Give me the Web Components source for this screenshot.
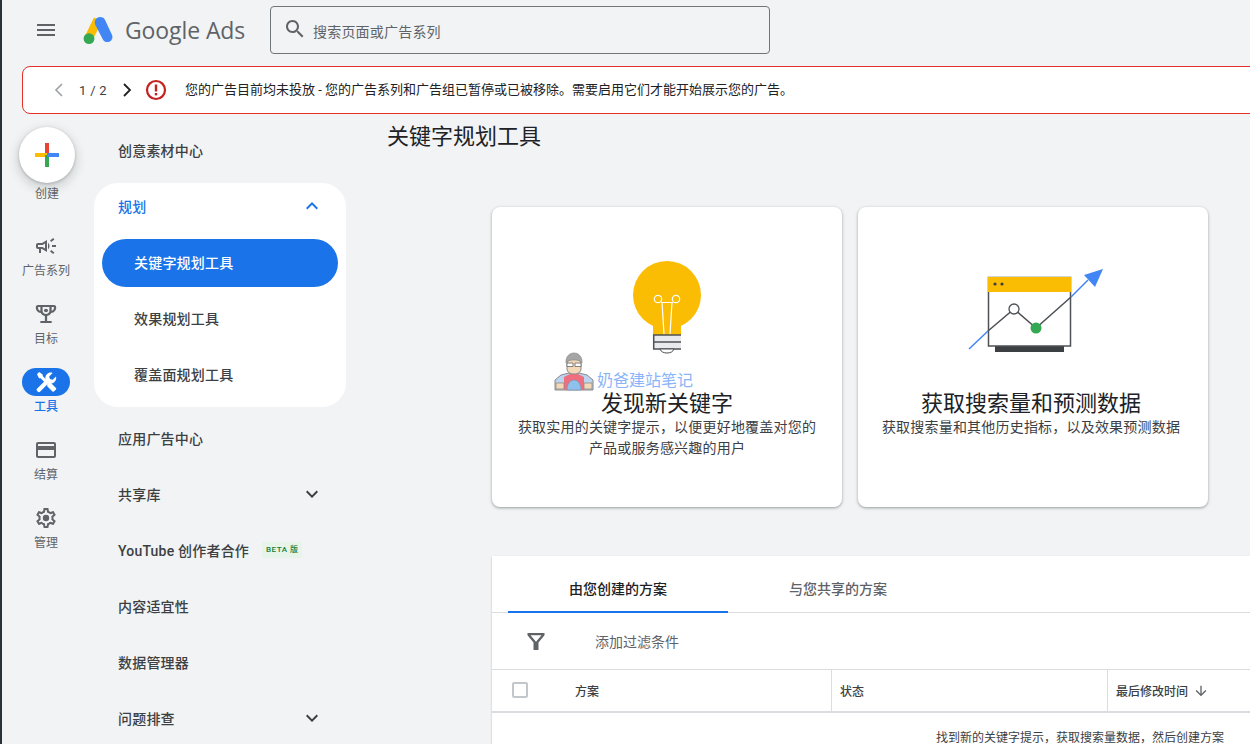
<!DOCTYPE html>
<html lang="zh">
<head>
<meta charset="utf-8">
<title>Google Ads</title>
<style>
  html, body { margin: 0; height: 744px; overflow: hidden; }
  body {
    background: #f1f3f4;
    border-left: 2px solid #2b3138;
    box-sizing: border-box;
    width: 1250px;
    color: #202124;
    font: 14px Roboto, "Noto Sans CJK SC", sans-serif;
    position: relative;
  }
  .workspace { display: flex; align-items: flex-start; }
  .group { display: flex; flex-direction: column; }
</style>
</head>
<body>
<template id="app-header-tpl">
  <style>
    :host { display: flex; align-items: center; height: 60px; padding-left: 32px; box-sizing: border-box; }
    svg.menu { width: 24px; height: 24px; fill: #5f6368; margin-right: 25px; }
    svg.logo { width: 32px; height: 30px; margin-right: 10px; }
    .word { font: 400 23px "Open Sans", Roboto, sans-serif; color: #5f6368; width: 145px; letter-spacing: -.1px; }
    .search { width: 500px; height: 48px; box-sizing: border-box; border: 1px solid #70757a; border-radius: 4px; display: flex; align-items: center; padding-left: 12px; gap: 6px; }
    .search svg { width: 24px; height: 24px; fill: #5f6368; margin-top: -2px; }
    .search span { color: #5f6368; font-size: 14px; letter-spacing: .2px; padding-top: 2px; }
  </style>
  <svg class="menu" viewBox="0 0 24 24"><path d="M3 18h18v-2H3v2zm0-5h18v-2H3v2zm0-7v2h18V6H3z"/></svg>
  <svg class="logo" viewBox="0 0 32 30">
    <path d="M11 2.5 2.2 20.5 9.5 25 19 6.5z" fill="#fbbc04"/>
    <path d="M19.8 2.6c-2.5-1.4-5.900-.7-7.300 1.900-1.400 2.500-.6 5 .8 7.300l6.600 12.600c1.400 2.600 4.400 3.400 6.900 2 2.500-1.400 3.400-4.500 2-7L22.200 5.200c-.6-1.100-1.400-2-2.400-2.600z" fill="#4285f4"/>
    <circle cx="6" cy="23.600" r="5.400" fill="#34a853"/>
  </svg>
  <span class="word">Google Ads</span>
  <div class="search">
    <svg viewBox="0 0 24 24"><path d="M15.500 14h-.79l-.28-.27C15.410 12.590 16 11.110 16 9.500 16 5.910 13.090 3 9.500 3S3 5.910 3 9.500 5.910 16 9.500 16c1.610 0 3.090-.59 4.230-1.570l.27.28v.79l5 4.990L20.490 19l-4.990-5zm-6 0C7.010 14 5 11.990 5 9.500S7.010 5 9.500 5 14 7.010 14 9.500 11.990 14 9.500 14z"/></svg>
    <span>搜索页面或广告系列</span>
  </div>
</template>

<template id="alert-banner-tpl">
  <style>
    :host { display: flex; align-items: center; height: 48px; box-sizing: border-box; margin: 6px 0 0 20px; width: 1240px; background: #fff; border: 1px solid #e5302a; border-radius: 8px; font-size: 13px; color: #202124; padding-left: 26px; }
    svg { flex: none; }
    .pager { color: #3c4043; font-size: 13px; width: 48px; text-align: center; letter-spacing: .3px; }
    .chev { width: 20px; height: 20px; }
    .err { width: 24px; height: 24px; margin: 0 17px 0 7px; }
    .msg { padding-bottom: 4px; }
  </style>
  <svg class="chev" viewBox="0 0 20 20" fill="none" stroke="#9aa0a6" stroke-width="1.600"><path d="M13 4 7 10l6 6"/></svg>
  <span class="pager">1 / 2</span>
  <svg class="chev" viewBox="0 0 20 20" fill="none" stroke="#202124" stroke-width="1.800"><path d="M7 4l6 6-6 6"/></svg>
  <svg class="err" viewBox="0 0 24 24"><circle cx="12" cy="12" r="9" fill="none" stroke="#c5221f" stroke-width="2.200"/><rect x="10.800" y="6.500" width="2.400" height="7" fill="#c5221f"/><rect x="10.800" y="15" width="2.400" height="2.400" fill="#c5221f"/></svg>
  <span class="msg"><slot></slot></span>
</template>

<template id="rail-item-tpl">
  <style>
    :host { display: flex; flex-direction: column; align-items: center; height: 48px; font-size: 12px; color: #5f6368; line-height: 16px; white-space: nowrap; }
    .pill { width: 48px; height: 28px; border-radius: 14px; display: flex; align-items: center; justify-content: center; margin-bottom: 3px; }
    ::slotted(svg) { width: 24px; height: 24px; fill: #5f6368; }
    :host([active]) .pill { background: #1a73e8; }
    :host([active]) ::slotted(svg) { fill: #fff; }
    :host([active]) { color: #1a73e8; font-weight: 500; }
  </style>
  <div class="pill"><slot name="icon"></slot></div>
  <span><slot></slot></span>
</template>

<template id="side-rail-tpl">
  <style>
    :host { display: flex; flex-direction: column; align-items: center; width: 88px; flex: none; padding-top: 13px; margin-right: 4px; box-sizing: border-box; font-size: 12px; color: #5f6368; }
    .fab { width: 56px; height: 56px; border-radius: 50%; background: #fff; box-shadow: 0 1px 3px rgba(60,64,67,.3), 0 4px 8px 3px rgba(60,64,67,.15); display: flex; align-items: center; justify-content: center; margin-left: 2px; }
    .fab svg { width: 24px; height: 24px; }
    .label { line-height: 16px; margin: 3px 0 30px 2px; }
    .items { display: flex; flex-direction: column; gap: 20px; }
  </style>
  <div class="fab">
    <svg viewBox="0 0 24 24">
      <rect x="10" y="0" width="4" height="12" fill="#ea4335"/>
      <rect x="0" y="10" width="12" height="4" fill="#fbbc04"/>
      <rect x="10" y="12" width="4" height="12" fill="#34a853"/>
      <rect x="12" y="10" width="12" height="4" fill="#4285f4"/>
    </svg>
  </div>
  <span class="label">创建</span>
  <div class="items"><slot></slot></div>
</template>

<template id="nav-item-tpl">
  <style>
    :host { display: flex; align-items: center; justify-content: space-between; height: 56px; padding: 0 22px 2px 24px; box-sizing: border-box; font-size: 14px; font-weight: 500; letter-spacing: .2px; color: #3c4043; white-space: nowrap; }
    .lead { display: flex; align-items: center; gap: 13px; }
    svg { width: 24px; height: 24px; fill: #3c4043; flex: none; display: none; }
    svg.show { display: block; }
    :host([sub]) { height: 48px; margin: 4px 8px; border-radius: 24px; padding: 0 32px 2px; }
    :host([selected]) { background: #1a73e8; color: #fff; }
    :host([head]) { height: 48px; margin-bottom: 4px; color: #1a73e8; }
    :host([head]) svg { fill: #1a73e8; }
    .beta { font-size: 8px; font-weight: 500; letter-spacing: .5px; color: #188038; background: #e6f4ea; padding: 3px 4px; border-radius: 2px; line-height: 10px; }
  </style>
  <div class="lead"><span><slot></slot></span><span class="beta" hidden><slot name="badge"></slot></span></div>
  <svg class="arrow" viewBox="0 0 24 24"><path d=""/></svg>
</template>

<template id="side-nav-tpl">
  <style>
    :host { display: block; width: 252px; flex: none; padding-top: 9px; box-sizing: border-box; }
    ::slotted(.group) { background: #fff; border-radius: 24px; margin: 4px 0; padding-bottom: 4px; }
  </style>
  <slot></slot>
</template>

<template id="tool-card-tpl">
  <style>
    :host { display: flex; flex-direction: column; align-items: center; width: 350px; height: 300px; box-sizing: border-box; background: #fff; border-radius: 8px; box-shadow: 0 1px 2px rgba(60,64,67,.3), 0 1px 3px 1px rgba(60,64,67,.15); text-align: center; }
    :host([nudge]) { padding-right: 4px; }
    .art { height: 183px; width: 100%; display: flex; justify-content: center; align-items: flex-end; }
    :host([nudge]) .art { margin-right: -4px; }
    h2 { margin: 0; font-size: 22px; font-weight: 400; line-height: 27px; color: #202124; }
    p { margin: 0; font-size: 14px; letter-spacing: .2px; line-height: 21px; color: #3c4043; width: 302px; }
  </style>
  <div class="art"><slot name="art"></slot></div>
  <h2><slot name="title"></slot></h2>
  <p><slot></slot></p>
</template>

<template id="plans-table-tpl">
  <style>
    :host { display: block; width: 758px; height: 188px; background: #fff; box-shadow: 0 1px 2px rgba(60,64,67,.3); font-size: 14px; color: #3c4043; overflow: hidden; }
    .tabs { display: flex; height: 57px; padding-left: 16px; border-bottom: 1px solid #dadce0; box-sizing: border-box; font-weight: 500; }
    .tab { width: 220px; display: flex; align-items: center; justify-content: center; color: #5f6368; box-sizing: border-box; padding-top: 8px; }
    .tab.on { color: #202124; border-bottom: 2px solid #1a73e8; margin-bottom: -1px; }
    .filter { display: flex; align-items: center; height: 57px; border-bottom: 1px solid #dadce0; box-sizing: border-box; padding-left: 32px; color: #5f6368; font-size: 14px; }
    .filter svg { width: 24px; height: 24px; fill: #5f6368; margin-right: 47px; }
    .head { display: grid; grid-template-columns: 340px 276px 1fr; height: 43px; box-sizing: border-box; border-bottom: 2px solid #dadce0; font-size: 12px; font-weight: 500; }
    .head div { display: flex; align-items: center; border-right: 1px solid #dadce0; padding-left: 8px; }
    .head div:first-child { padding-left: 20px; }
    .head div:last-child { border: 0; }
    .check { width: 12px; height: 12px; border: 2px solid #c4c7c9; border-radius: 2px; margin-right: 47px; margin-top: -2px; }
    .head svg { width: 16px; height: 16px; fill: #5f6368; margin-left: 5px; }
    .empty { text-align: right; padding: 18px 26px 0 0; font-size: 12px; color: #3c4043; line-height: 14px; }
  </style>
  <div class="tabs"><div class="tab on">由您创建的方案</div><div class="tab">与您共享的方案</div></div>
  <div class="filter">
    <svg viewBox="0 0 24 24"><path d="M3.500 4h17v2.200l-6 7.300V21h-5v-7.500l-6-7.300zm3 2.200 5.500 6.600 5.500-6.600z" fill-rule="evenodd"/></svg>
    添加过滤条件
  </div>
  <div class="head">
    <div><span class="check"></span>方案</div>
    <div>状态</div>
    <div>最后修改时间<svg viewBox="0 0 24 24"><path d="M20 12l-1.410-1.410L13 16.170V4h-2v12.170l-5.580-5.590L4 12l8 8 8-8z"/></svg></div>
  </div>
  <div class="empty">找到新的关键字提示，获取搜索量数据，然后创建方案</div>
</template>

<template id="water-mark-tpl">
  <style>
    :host { position: absolute; left: 551px; top: 351px; display: flex; align-items: flex-end; font-size: 16px; color: #8ab4f8; line-height: 22px; }
    svg { width: 42px; height: 41px; margin-right: 2px; }
  </style>
  <svg viewBox="0 0 42 41">
    <path d="M2 39V29l6-5 8-2h10l8 2 6 5v10z" fill="#bcd4ef" stroke="#8a8a8a" stroke-width="1"/>
    <path d="M11 39V26l6-3h8l6 3v13z" fill="#ef6f7f"/>
    <path d="M14 39c0-6 3-10 7-10s7 4 7 10z" fill="#8fc1ee" stroke="#7c93ad" stroke-width=".7"/>
    <rect x="3" y="32" width="8" height="6" fill="#f3d9b8" stroke="#8a8a8a" stroke-width=".8"/>
    <rect x="31" y="32" width="8" height="6" fill="#f3d9b8" stroke="#8a8a8a" stroke-width=".8"/>
    <path d="M14 13c0-4 3-6 7-6s7 2 7 6v5c0 3-3 5-7 5s-7-2-7-5z" fill="#f3d9b8" stroke="#8a8a8a"/>
    <path d="M13 12c-.5-7 4-10 8-10s8.500 3 8 10c-2-2-3-3-8-3s-6 1-8 3z" fill="#a5a5a5" stroke="#8a8a8a" stroke-width=".7"/>
    <path d="M14 12h6v3.500h-6zm8 0h6v3.500h-6z" fill="#fff" stroke="#666" stroke-width=".8"/>
  </svg>
  <span><slot></slot></span>
</template>

<template id="keyword-page-tpl">
  <style>
    :host { display: block; flex: 1; min-width: 0; }
    h1 { margin: 8px 0 0 41px; font-size: 22px; font-weight: 400; line-height: 30px; color: #202124; }
    .cards { display: flex; gap: 16px; margin: 55px 0 0 146px; }
    .table { margin: 49px 0 0 146px; }
  </style>
  <h1>关键字规划工具</h1>
  <div class="cards"><slot></slot></div>
  <div class="table"><slot name="table"></slot></div>
</template>

<app-header></app-header>
<alert-banner>您的广告目前均未投放 - 您的广告系列和广告组已暂停或已被移除。需要启用它们才能开始展示您的广告。</alert-banner>
<div class="workspace">
  <side-rail>
    <rail-item><svg slot="icon" viewBox="0 0 24 24"><path d="M18 11v2h4v-2h-4zm-2 6.610c.96.71 2.210 1.650 3.200 2.390.4-.53.8-1.070 1.200-1.600-.99-.74-2.240-1.680-3.200-2.400-.4.54-.8 1.080-1.200 1.610zM20.400 5.600c-.4-.53-.8-1.070-1.200-1.600-.99.74-2.240 1.680-3.200 2.400.4.53.8 1.070 1.200 1.600.96-.72 2.210-1.650 3.200-2.400zM4 9c-1.100 0-2 .9-2 2v2c0 1.100.9 2 2 2h1v4h2v-4h1l5 3V6L8 9H4zm5.030 1.710L11 9.530v4.940l-1.970-1.180-.48-.29H4v-2h4.550l.48-.29zM15.500 12c0-1.330-.58-2.530-1.500-3.350v6.690c.92-.81 1.500-2.010 1.500-3.340z"/></svg>广告系列</rail-item>
    <rail-item><svg slot="icon" viewBox="0 0 24 24"><g transform="translate(12 0) scale(1.130 1) translate(-12 0)"><path fill-rule="evenodd" d="M19 3H5C3.900 3 3 3.900 3 5v1c0 2.550 1.920 4.630 4.390 4.940.63 1.500 1.980 2.630 3.610 2.960V19H7v2h10v-2h-4v-5.100c1.630-.33 2.980-1.460 3.610-2.960C19.080 10.630 21 8.550 21 6V5c0-1.100-.9-2-2-2zM5 6V5h2v3.820C5.840 8.400 5 7.300 5 6zm7 6c-1.650 0-3-1.350-3-3V5h6v4c0 1.650-1.350 3-3 3zm7-6c0 1.300-.84 2.400-2 2.820V5h2v1z"/><circle cx="12" cy="8.500" r="1.800"/></g></svg>目标</rail-item>
    <rail-item active><svg slot="icon" viewBox="0 0 24 24"><path d="M3 4.200 5.100 2l3.600 2.500v1.600l4.800 4.800-2.100 2.100-4.800-4.800H5z"/><path d="M13.200 14.200l2-2h1l5.800 5.800c.4.4.4 1 0 1.400l-2.100 2.100c-.4.4-1 .4-1.400 0l-5.300-5.300z"/><path d="M22 6.400l-3.400 3.400-2.700-.7-.7-2.700 3.400-3.400c-2-.8-4.300-.3-5.800 1.200-1.500 1.600-1.900 3.800-1.100 5.800L3 18.700c-.6.6-.6 1.500 0 2.100l.9.9c.6.6 1.500.6 2.100 0l8.700-8.600c2 .7 4.200.3 5.800-1.200 1.500-1.500 2.100-3.500 1.500-5.500z"/></svg>工具</rail-item>
    <rail-item><svg slot="icon" viewBox="0 0 24 24"><path d="M20 4H4c-1.110 0-1.990.89-1.990 2L2 18c0 1.110.89 2 2 2h16c1.110 0 2-.89 2-2V6c0-1.110-.89-2-2-2zm0 14H4v-6h16v6zm0-10H4V6h16v2z"/></svg>结算</rail-item>
    <rail-item><svg slot="icon" viewBox="0 0 24 24"><path d="M19.430 12.980c.04-.32.07-.64.07-.98 0-.34-.03-.66-.07-.98l2.110-1.650c.19-.15.24-.42.12-.64l-2-3.460c-.09-.16-.26-.25-.44-.25-.06 0-.12.01-.17.03l-2.490 1c-.52-.4-1.080-.73-1.690-.98l-.38-2.650C14.460 2.180 14.250 2 14 2h-4c-.25 0-.46.18-.49.42l-.38 2.650c-.61.25-1.170.59-1.690.98l-2.490-1c-.06-.02-.12-.03-.18-.03-.17 0-.34.09-.43.25l-2 3.460c-.13.22-.07.49.12.64l2.110 1.650c-.04.32-.07.65-.07.98 0 .33.03.66.07.98l-2.110 1.650c-.19.15-.24.42-.12.64l2 3.460c.09.16.26.25.44.25.06 0 .12-.01.17-.03l2.490-1c.52.4 1.080.73 1.690.98l.38 2.650c.03.24.24.42.49.42h4c.25 0 .46-.18.49-.42l.38-2.650c.61-.25 1.170-.59 1.690-.98l2.490 1c.06.02.12.03.18.03.17 0 .34-.09.43-.25l2-3.460c.12-.22.07-.49-.12-.64l-2.110-1.650zm-1.980-1.710c.04.31.05.52.05.73 0 .21-.02.43-.05.73l-.14 1.130.89.7 1.080.84-.7 1.210-1.270-.51-1.040-.42-.9.68c-.43.32-.84.56-1.250.73l-1.060.43-.16 1.130-.2 1.350h-1.400l-.19-1.350-.16-1.130-1.060-.43c-.43-.18-.83-.41-1.230-.71l-.91-.7-1.060.43-1.270.51-.7-1.210 1.080-.84.89-.7-.14-1.130c-.03-.31-.05-.54-.05-.74s.02-.43.05-.73l.14-1.130-.89-.7-1.080-.84.7-1.210 1.270.51 1.040.42.9-.68c.43-.32.84-.56 1.250-.73l1.060-.43.16-1.130.2-1.350h1.390l.19 1.350.16 1.130 1.060.43c.43.18.83.41 1.230.71l.91.7 1.060-.43 1.270-.51.7 1.210-1.070.85-.89.7.14 1.130z"/><circle cx="12" cy="12" r="3.200"/></svg>管理</rail-item>
  </side-rail>
  <side-nav>
    <nav-item>创意素材中心</nav-item>
    <div class="group">
      <nav-item head arrow="up">规划</nav-item>
      <nav-item sub selected>关键字规划工具</nav-item>
      <nav-item sub>效果规划工具</nav-item>
      <nav-item sub>覆盖面规划工具</nav-item>
    </div>
    <nav-item>应用广告中心</nav-item>
    <nav-item arrow="down">共享库</nav-item>
    <nav-item>YouTube 创作者合作<span slot="badge">BETA 版</span></nav-item>
    <nav-item>内容适宜性</nav-item>
    <nav-item>数据管理器</nav-item>
    <nav-item arrow="down">问题排查</nav-item>
  </side-nav>
  <keyword-page>
    <tool-card>
      <svg slot="art" width="80" height="96" viewBox="0 0 80 96" style="margin-bottom:33px">
        <circle cx="40" cy="34" r="34" fill="#fbbc04"/>
        <path d="M26 56h28v18H26z" fill="#fbbc04"/>
        <path d="M26 74h28v14H26z" fill="#e8eaed"/>
        <path d="M54 74H26.700v14H54M26 81h28" stroke="#4d5156" stroke-width="1.500" fill="none"/>
        <path d="M33 88c1 3 4 4 7 4s6-1 7-4z" fill="#fff" stroke="#4d5156" stroke-width="1"/>
        <circle cx="31" cy="38" r="3.700" fill="none" stroke="#fff" stroke-width="1.200"/>
        <circle cx="49" cy="38" r="3.700" fill="none" stroke="#fff" stroke-width="1.200"/>
        <path d="M34 41.500h12M35 41.500 37 73M45 41.500 43 73" fill="none" stroke="#fff" stroke-width="1.200"/>
      </svg>
      <span slot="title">发现新关键字</span>
      获取实用的关键字提示，以便更好地覆盖对您的产品或服务感兴趣的用户
    </tool-card>
    <tool-card nudge>
      <svg slot="art" width="140" height="90" viewBox="0 0 140 90" style="margin-bottom:35px;overflow:visible">
        <rect x="32" y="81" width="69" height="6" fill="#3c4043"/>
        <rect x="25.500" y="12.500" width="82" height="68.500" fill="#fff" stroke="#4d5156" stroke-width="1.500"/>
        <rect x="25" y="12" width="83" height="15" fill="#fbbc04"/>
        <circle cx="32" cy="19" r="1.600" fill="#3c4043"/><circle cx="39" cy="19" r="1.600" fill="#3c4043"/>
        <path d="M25 66 51 44 73 63 108 32" fill="none" stroke="#4d5156" stroke-width="1.500"/>
        <circle cx="51" cy="44" r="5" fill="#fff" stroke="#4d5156" stroke-width="1.300"/>
        <circle cx="73" cy="63" r="5.500" fill="#34a853"/>
        <path d="M6 84 25 66M108 32 125 15" stroke="#4285f4" stroke-width="1.500" fill="none"/>
        <path d="M140 4 132 22 121 10z" fill="#4285f4"/>
      </svg>
      <span slot="title">获取搜索量和预测数据</span>
      获取搜索量和其他历史指标，以及效果预测数据
    </tool-card>
    <plans-table slot="table"></plans-table>
  </keyword-page>
</div>
<water-mark>奶爸建站笔记</water-mark>

<script>
  // small helper, every element just stamps its template into an open shadow root
  function stamp(name) {
    customElements.define(name, class extends HTMLElement {
      constructor() {
        super();
        this.attachShadow({ mode: 'open' });
        const tpl = document.getElementById(name + '-tpl');
        this.shadowRoot.appendChild(tpl.content.cloneNode(true));
      }
    });
  }

  ['app-header', 'alert-banner', 'rail-item', 'side-rail', 'side-nav',
   'tool-card', 'plans-table', 'water-mark', 'keyword-page'].forEach(stamp);

  class NavItem extends HTMLElement {
    constructor() {
      super();
      this.attachShadow({ mode: 'open' });
      this.shadowRoot.appendChild(document.getElementById('nav-item-tpl').content.cloneNode(true));
    }

    connectedCallback() {
      const dir = this.getAttribute('arrow');
      const arrow = this.shadowRoot.querySelector('.arrow');
      if (dir) {
        arrow.classList.add('show');
        arrow.querySelector('path').setAttribute('d', dir === 'up'
          ? 'M12 8l-6 6 1.410 1.410L12 10.830l4.590 4.580L18 14z'
          : 'M16.590 8.590L12 13.170 7.410 8.590 6 10l6 6 6-6z');
      }
      if (this.querySelector('[slot=badge]')) {
        this.shadowRoot.querySelector('.beta').hidden = false;
      }
    }
  }
  customElements.define('nav-item', NavItem);
</script>
</body>
</html>
